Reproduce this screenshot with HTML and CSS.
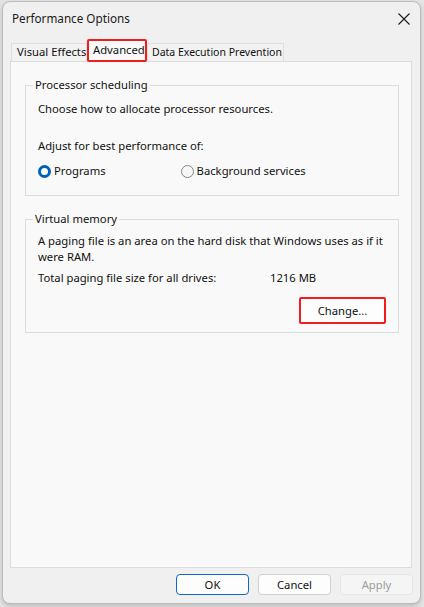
FILE: index.html
```html
<!DOCTYPE html>
<html>
<head>
<meta charset="utf-8">
<link rel="stylesheet" href="styles.css">
</head>
<body>
<div class="window">
  <div class="titlebar">
    <span class="title">Performance Options</span>
    <svg class="close" width="14" height="14" viewBox="0 0 14 14"><path d="M1.5 1.5 L12.5 12.5 M12.5 1.5 L1.5 12.5" stroke="#1b1b1b" stroke-width="1.1" fill="none"/></svg>
  </div>
  <div class="tabs">
    <div class="tab">Visual Effects</div>
    <div class="tab active">Advanced</div>
    <div class="tab">Data Execution Prevention</div>
  </div>
  <div class="panel">
    <fieldset class="group group-proc">
      <legend>Processor scheduling</legend>
      <p class="line first">Choose how to allocate processor resources.</p>
      <p class="line adjust">Adjust for best performance of:</p>
      <div class="radios">
        <label class="radio"><span class="dot on"></span>Programs</label>
        <label class="radio second"><span class="dot"></span>Background services</label>
      </div>
    </fieldset>
    <fieldset class="group group-vm">
      <legend>Virtual memory</legend>
      <p class="line first">A paging file is an area on the hard disk that Windows uses as if it were RAM.</p>
      <div class="total"><span class="total-label">Total paging file size for all drives:</span><span>1216 MB</span></div>
      <div class="change-row"><button class="change">Change...</button></div>
    </fieldset>
  </div>
  <div class="footer">
    <button class="btn ok">OK</button>
    <button class="btn">Cancel</button>
    <button class="btn disabled">Apply</button>
  </div>
</div>
</body>
</html>
```
FILE: styles.css
```css
* { box-sizing: border-box; }
html, body { margin: 0; padding: 0; }
body {
  background: #e4e4e4;
  font-family: "Noto Sans", "Open Sans", sans-serif;
  font-size: 11.25px;
  color: #111;
  width: 424px;
  height: 607px;
  overflow: hidden;
}
.window {
  margin: 1px 3px 0 2px;
  height: 603px;
  background: #f0f0f0;
  border: 1px solid #bcbcbc;
  border-radius: 8px;
  box-shadow: 0 2px 4px rgba(0,0,0,0.18);
  display: flex;
  flex-direction: column;
}
.titlebar {
  height: 36px;
  display: flex;
  align-items: flex-start;
  justify-content: space-between;
  padding: 8px 9px 0 9px;
}
.title { font-size: 11.7px; color: #1a1a1a; line-height: 17px; }
.close { display: block; margin-top: 2px; }
.tabs {
  display: flex;
  align-items: flex-end;
  height: 23px;
  padding-left: 8px;
}
.tab {
  height: 18px;
  line-height: 16px;
  padding: 0 5px;
  background: #f2f2f2;
  border: 1px solid #dedede;
  border-bottom: none;
  color: #111;
  white-space: nowrap;
  overflow: hidden;
}
.tab:first-child { padding: 0 4px 0 5px; width: 76px; }
.tab.active {
  height: 23px;
  line-height: 18px;
  width: 60px;
  padding: 0 4px;
  background: #f9f9f9;
  border: 2px solid #f21c1c;
  border-radius: 2px;
  position: relative;
  z-index: 1;
  margin-bottom: -1px;
}
.tab:last-child { width: 137px; padding: 0 4px; font-size: 10.5px; }
.panel {
  margin: 0 8px 0 7px;
  height: 507px;
  background: #f9f9f9;
  border: 1px solid #dcdcdc;
  padding: 16px 12px 0 14px;
}
.group {
  margin: 0;
  border: 1px solid #dcdcdc;
  padding: 0 12px 0 12px;
  min-width: 0;
}
.group legend {
  padding: 0 2px;
  margin-left: -5px;
  line-height: 14px;
}
.line { margin: 0; line-height: 16px; }
.group-proc { height: 118px; }
.group-proc .first { margin-top: 9px; }
.group-proc .adjust { margin-top: 21px; }
.radios { display: flex; margin-top: 9px; align-items: center; }
.radio { display: flex; align-items: center; line-height: 16px; }
.radio.second { margin-left: 75px; }
.dot {
  width: 13px; height: 13px;
  border-radius: 50%;
  border: 1px solid #858585;
  background: #f6f6f6;
  margin-right: 3px;
  display: inline-block;
}
.dot.on {
  border: 3.5px solid #0060b8;
  background: #ffffff;
}
.group-vm { margin-top: 16px; height: 121px; }
.group-vm .first { margin-top: 7px; }
.total { display: flex; margin-top: 5px; line-height: 16px; }
.total-label { width: 232px; }
.change-row { display: flex; justify-content: flex-end; margin-top: 11px; }
.change {
  width: 87px; height: 27px;
  border: 2px solid #f21c1c;
  border-radius: 2px;
  background: #fdfdfd;
  font: inherit;
  color: #111;
  padding: 0;
}
.footer {
  display: flex;
  justify-content: flex-end;
  gap: 9px;
  padding: 6px 7px 0 0;
}
.btn {
  width: 73px; height: 21px;
  border: 1px solid #d0d0d0;
  border-radius: 4px;
  background: #fdfdfd;
  font: inherit;
  color: #111;
  padding: 0;
}
.btn.ok { border-color: #1068c8; }
.btn.disabled { background: #f5f5f5; border-color: #e6e6e6; color: #9c9c9c; }
```
